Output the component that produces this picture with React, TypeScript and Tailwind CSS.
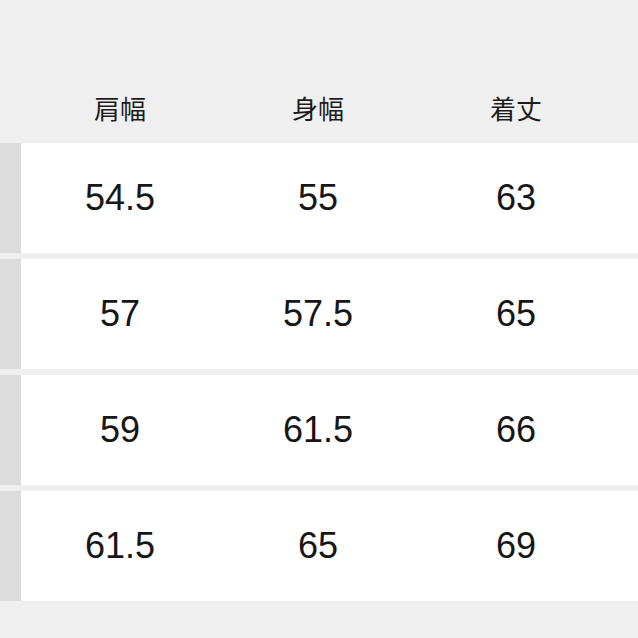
export default function App() {
	const headers = ["肩幅", "身幅", "着丈"];
	const rows = [
		["54.5", "55", "63"],
		["57", "57.5", "65"],
		["59", "61.5", "66"],
		["61.5", "65", "69"],
	];

	return (
		<div className="w-[638px] h-[638px] bg-[#efefef] pt-[72px] flex flex-col overflow-hidden">
			{/* Header */}
			<div className="h-[71px] pl-[21px] grid grid-cols-[198px_198px_198px] items-center">
				{headers.map((h) => (
					<div
						key={h}
						className="text-center text-[26px] text-[#1c1c1c] font-['Noto_Sans_CJK_JP',sans-serif]"
					>
						{h}
					</div>
				))}
			</div>

			{/* Rows */}
			<div className="flex flex-col gap-[6px]">
				{rows.map((row, i) => (
					<div key={i} className="h-[110px] flex bg-white">
						<div className="w-[21px] bg-[#dcdcdc]" />
						<div className="grid grid-cols-[198px_198px_198px] items-center">
							{row.map((v, j) => (
								<div
									key={j}
									className="text-center text-[36px] text-[#161616] font-['Liberation_Sans',Arial,sans-serif]"
								>
									{v}
								</div>
							))}
						</div>
					</div>
				))}
			</div>
		</div>
	);
}
